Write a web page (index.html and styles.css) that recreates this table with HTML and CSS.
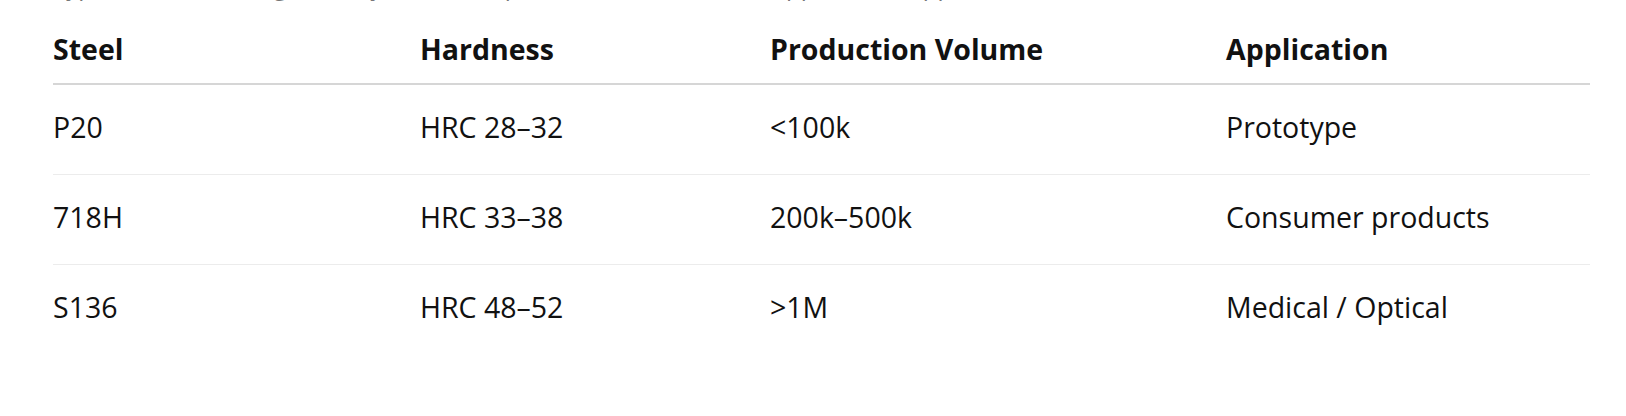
FILE: index.html
```html
<!DOCTYPE html>
<html lang="en">
<head>
<meta charset="utf-8">
<title>Steel selection</title>
<link rel="stylesheet" href="styles.css">
</head>
<body>
<div class="wrap">
  <p class="caption">Typical mould steel grades by hardness, production volume and application (approx.)</p>
  <table class="steel-table">
    <colgroup>
      <col class="c1"><col class="c2"><col class="c3"><col class="c4">
    </colgroup>
    <thead>
      <tr><th>Steel</th><th>Hardness</th><th>Production Volume</th><th>Application</th></tr>
    </thead>
    <tbody>
      <tr><td>P20</td><td>HRC 28–32</td><td>&lt;100k</td><td>Prototype</td></tr>
      <tr><td>718H</td><td>HRC 33–38</td><td>200k–500k</td><td>Consumer products</td></tr>
      <tr><td>S136</td><td>HRC 48–52</td><td>&gt;1M</td><td>Medical / Optical</td></tr>
    </tbody>
  </table>
</div>
</body>
</html>
```
FILE: styles.css
```css
html, body {
  margin: 0;
  padding: 0;
  background: #ffffff;
}
body {
  font-family: "Open Sans", "Noto Sans", sans-serif;
  color: #111111;
}
.wrap {
  padding-left: 53px;
  width: 1537px;
}
.caption {
  margin: -27px 0 18px 0;
  height: 26px;
  font-size: 24px;
  line-height: 26px;
  color: #777777;
  white-space: nowrap;
}
.steel-table {
  width: 1537px;
  border-collapse: collapse;
  table-layout: fixed;
  font-size: 28.5px;
}
.c1 { width: 367px; }
.c2 { width: 350px; }
.c3 { width: 456px; }
.c4 { width: 364px; }
.steel-table th {
  text-align: left;
  font-weight: 700;
  padding: 12px 0 14px 0;
  line-height: 40px;
  border-bottom: 2px solid #d6d6d6;
}
.steel-table td {
  padding: 22px 0 26px 0;
  line-height: 41px;
  border-bottom: 1px solid #ececec;
}
.steel-table tbody tr:last-child td {
  border-bottom: none;
}
```
